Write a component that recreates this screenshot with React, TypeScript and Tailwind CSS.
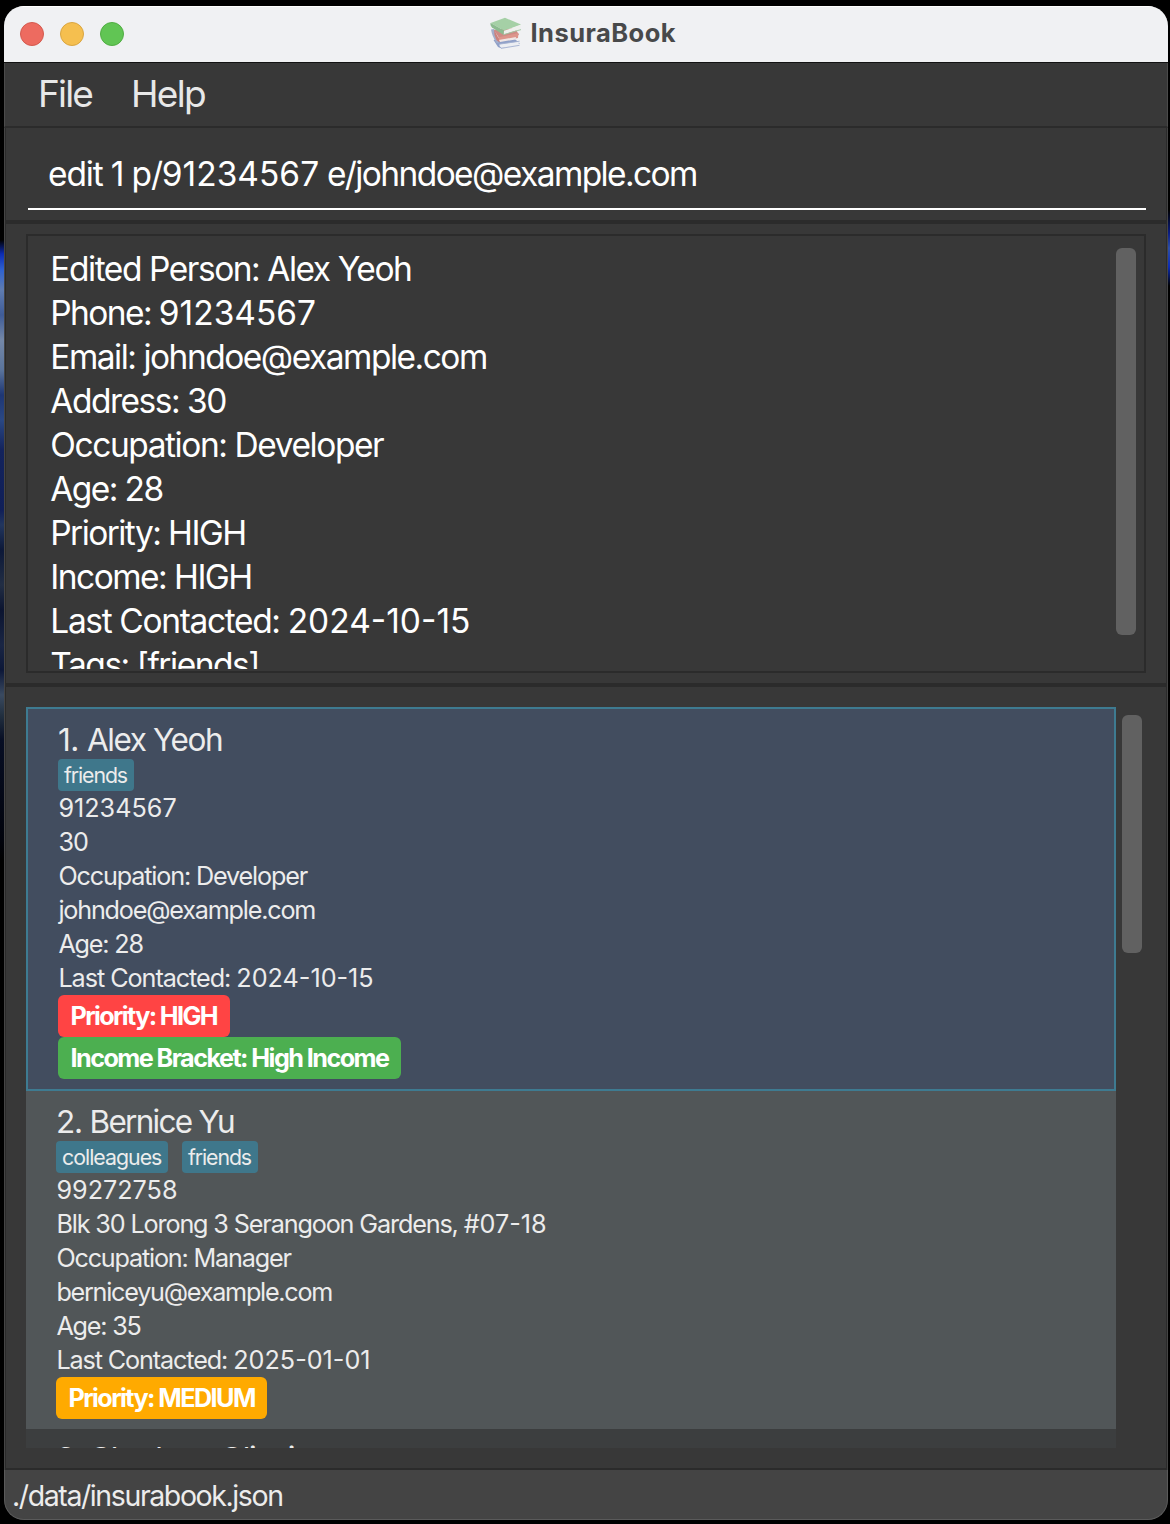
import React from 'react';
import clsx from 'clsx';

type Line = { text: string; digits?: string; tracking: string };

const resultLines: Line[] = [
  { text: 'Edited Person: Alex Yeoh', tracking: 'tracking-[-1.46px]' },
  { text: 'Phone: ', digits: '91234567', tracking: 'tracking-[-1.6px]' },
  { text: 'Email: johndoe@example.com', tracking: 'tracking-[-1.5px]' },
  { text: 'Address: 30', tracking: 'tracking-[-1.5px]' },
  { text: 'Occupation: Developer', tracking: 'tracking-[-1.43px]' },
  { text: 'Age: 28', tracking: 'tracking-[-1.6px]' },
  { text: 'Priority: HIGH', tracking: 'tracking-[-1.57px]' },
  { text: 'Income: HIGH', tracking: 'tracking-[-1.53px]' },
  { text: 'Last Contacted: ', digits: '2024-10-15', tracking: 'tracking-[-1.35px]' },
  { text: 'Tags: [friends]', tracking: 'tracking-[-1.48px]' },
];

type Tag = { label: string; className: string };
type Badge = { label: string; className: string };
type Person = {
  index: string;
  indexTracking: string;
  name: string;
  nameTracking: string;
  tags: Tag[];
  lines: Line[];
  badges: Badge[];
  className: string;
};

const people: Person[] = [
  {
    index: '1. ',
    indexTracking: 'tracking-[-0.6px]',
    name: 'Alex Yeoh',
    nameTracking: 'tracking-[-1.4px]',
    className: 'h-[384px] border-2 border-[#3e7b91] bg-[#424d5f] pt-[10px]',
    tags: [{ label: 'friends', className: 'w-[76px] tracking-[-1.1px]' }],
    lines: [
      { text: '', digits: '91234567', tracking: '' },
      { text: '30', tracking: 'tracking-[-1px]' },
      { text: 'Occupation: Developer', tracking: 'tracking-[-1.15px]' },
      { text: 'johndoe@example.com', tracking: 'tracking-[-1.2px]' },
      { text: 'Age: 28', tracking: 'tracking-[-1.2px]' },
      { text: 'Last Contacted: ', digits: '2024-10-15', tracking: 'tracking-[-1.05px]' },
    ],
    badges: [
      { label: 'Priority: HIGH', className: 'w-[172px] bg-[#ff4444] tracking-[-1.63px]' },
      { label: 'Income Bracket: High Income', className: 'w-[343px] bg-[#4caf50] tracking-[-1.55px]' },
    ],
  },
  {
    index: '2. ',
    indexTracking: 'tracking-[-1.2px]',
    name: 'Bernice Yu',
    nameTracking: 'tracking-[-1.72px]',
    className: 'h-[338px] bg-[#515658] pt-[10px]',
    tags: [
      { label: 'colleagues', className: 'w-[112px] tracking-[-0.98px]' },
      { label: 'friends', className: 'w-[76px] tracking-[-1.1px]' },
    ],
    lines: [
      { text: '', digits: '99272758', tracking: '' },
      { text: 'Blk 30 Lorong 3 Serangoon Gardens, ', digits: '#07-18', tracking: 'tracking-[-1.14px]' },
      { text: 'Occupation: Manager', tracking: 'tracking-[-1.19px]' },
      { text: 'berniceyu@example.com', tracking: 'tracking-[-1.25px]' },
      { text: 'Age: 35', tracking: 'tracking-[-1.2px]' },
      { text: 'Last Contacted: ', digits: '2025-01-01', tracking: 'tracking-[-1.12px]' },
    ],
    badges: [{ label: 'Priority: MEDIUM', className: 'w-[211px] bg-[#ffaa00] tracking-[-1.58px]' }],
  },
  {
    index: '3. ',
    indexTracking: 'tracking-[-1.2px]',
    name: 'Charlotte Oliveiro',
    nameTracking: 'tracking-[-1.4px]',
    className: 'h-[338px] bg-[#3c3e3f] pt-[9px]',
    tags: [],
    lines: [],
    badges: [],
  },
];

function TextLine({ line, className }: { line: Line; className: string }) {
  return (
    <div className={clsx('whitespace-pre', className)}>
      <span className={line.tracking}>{line.text}</span>
      {line.digits && <span>{line.digits}</span>}
    </div>
  );
}

function BooksIcon() {
  return (
    <svg viewBox="0 0 32 32" className="h-8 w-8" aria-hidden="true">
      <path d="M3.5 23 L23 20.5 L30 26.5 L11 31.3 L8 30 Z" fill="#8fa0c8" />
      <path d="M9.5 27.2 L29 24.6 L28.6 28 L11.5 31 Q8.8 29.5 9.5 27.2Z" fill="#eceef2" />
      <path d="M9 27.2 L29.6 24.2 M11 31.4 L29.5 28.3" stroke="#a3b0cf" strokeWidth="0.9" fill="none" />
      <path d="M1 12.5 L4 12 L9 26.5 L6.5 26 Q2 19 1 12.5Z" fill="#a3aecb" />
      <path d="M4 13 L25 11 L29 18 L9 21 Z" fill="#cf8a84" />
      <path d="M5.5 17 L8 20.5 L28.5 16 L28 21 L9.5 24.5 Q5 21.5 5.5 17Z" fill="#dd958b" />
      <path d="M8.8 23 L26 20 L25.6 22.4 L10 25Z" fill="#f0e6e4" />
      <path d="M4 12 L8.6 21.5 L9.8 25.4 L6.6 23.2 Q3.6 17.5 4 12Z" fill="#cb827d" />
      <path d="M0.6 6 L15 0.8 L31 7.6 L14 13.6 Z" fill="#a5d0a6" />
      <path d="M0.6 6 L14 13.6 L13.6 18 L2 10.6 Q-0.2 8 0.6 6Z" fill="#8cbb90" />
      <path d="M14 13.8 L31 8 L30.4 12.2 L13.8 17.4Z" fill="#eef0ed" />
      <path d="M13.4 17.7 L31 12.6" stroke="#9dc5a0" strokeWidth="0.9" />
    </svg>
  );
}

function PersonCard({ person }: { person: Person }) {
  return (
    <div className={clsx('flex shrink-0 flex-col items-start pl-[30px] text-[#ececec]', person.className)}>
      <div className="h-10 shrink-0 text-[31.5px] leading-[41px] whitespace-pre">
        <span className={person.indexTracking}>{person.index}</span>
        <span className={person.nameTracking}>{person.name}</span>
      </div>
      {person.tags.length > 0 && (
        <div className="flex h-8 shrink-0 gap-[14px]">
          {person.tags.map((t) => (
            <span
              key={t.label}
              className={clsx('rounded-[4px] bg-[#3f778b] pl-[6px] text-[21.3px] leading-8 whitespace-nowrap', t.className)}
            >
              {t.label}
            </span>
          ))}
        </div>
      )}
      {person.lines.map((l, i) => (
        <TextLine key={i} line={l} className="h-[34px] pl-[0.4px] text-[25.2px] leading-[34px]" />
      ))}
      {person.badges.map((b) => (
        <span
          key={b.label}
          className={clsx(
            'h-[42px] rounded-[6px] pl-[12.5px] text-[25.2px] leading-[42px] font-bold whitespace-nowrap text-white',
            b.className,
          )}
        >
          {b.label}
        </span>
      ))}
    </div>
  );
}

export default function App() {
  return (
    <div className="flex h-[1524px] w-[1170px] bg-black pt-[6px] pb-1 font-['Inter',sans-serif]">
      <div className="mt-[234px] h-[620px] w-1 shrink-0 bg-[linear-gradient(to_bottom,#000_0,#0c2cb4_14px,#2f62d0_30px,#5f7cb0_50px,#3f5c98_75px,#7488a8_100px,#5a749c_130px,#1e3674_155px,#2a4884_180px,#13235c_210px,#101f58_270px,#22365e_285px,#0c1838_310px,#222e44_345px,#0b1430_370px,#1a2644_405px,#0c1738_430px,#3a4a60_455px,#223040_475px,#070e24_500px,#01030c_600px,#000_620px)]" />

      <div className="flex w-[1164px] flex-col overflow-hidden rounded-[20px] bg-[#383838]">
        <header className="flex h-[57px] shrink-0 items-center border-t border-b border-t-white border-b-[#121212] bg-[#f0f1f3] pl-4">
          <div className="flex gap-4 pb-px">
            <span className="h-6 w-6 rounded-full border border-[#d35a4e] bg-[#ed6b60]" />
            <span className="h-6 w-6 rounded-full border border-[#d9a540] bg-[#f5bf4f]" />
            <span className="h-6 w-6 rounded-full border border-[#51ad43] bg-[#61c554]" />
          </div>
          <div className="ml-[366px] flex items-center pb-1">
            <BooksIcon />
            <h1 className="ml-[8.5px] pt-px text-[25.5px] leading-8 font-bold tracking-[0.45px] text-[#48494a]">InsuraBook</h1>
          </div>
        </header>

        <nav className="flex h-[65px] shrink-0 border-x border-b-2 border-x-[#4b4b4b] border-b-[#2b2b2b] pl-[33px] text-[37px] leading-[61px] text-[#e8e8e8]">
          <span className="w-[93px] tracking-[-1.8px]">File</span>
          <span className="tracking-[-1.7px]">Help</span>
        </nav>

        <main className="flex min-h-0 flex-1 flex-col border-x border-x-[#454545]">
          <section className="h-24 shrink-0 border-x border-b-4 border-[#2b2b2b] px-[22px] pt-[10px]">
            <div className="h-[72px] w-[1118px] border-b-2 border-white pl-5 text-[33.5px] leading-[72px] whitespace-pre text-white">
              <span className="tracking-[-1.15px]">edit 1 p/</span>
              <span>91234567</span>
              <span className="tracking-[-1.6px]"> e/johndoe@example.com</span>
            </div>
          </section>

          <section className="h-[463px] shrink-0 border-x border-b-4 border-[#2b2b2b] pt-[10px] pl-5">
            <div className="flex h-[439px] w-[1120px] justify-between border-2 border-[#2b2b2b] pr-2 pl-[22.3px]">
              <div className="h-[433px] overflow-hidden pt-[11px] text-[33.5px] leading-[44px] text-white">
                {resultLines.map((l) => (
                  <TextLine key={l.text} line={l} className="h-[44px]" />
                ))}
              </div>
              <div className="mt-3 h-[387px] w-5 rounded-[6px] bg-[#616161]" />
            </div>
          </section>

          <section className="flex min-h-0 flex-1 items-start border-x border-b-2 border-[#2b2b2b] pt-5 pl-5">
            <div className="flex h-[741px] w-[1090px] flex-col overflow-hidden">
              {people.map((p) => (
                <PersonCard key={p.name} person={p} />
              ))}
            </div>
            <div className="mt-2 ml-[6px] h-[238px] w-5 rounded-[6px] bg-[#616161]" />
          </section>
        </main>

        <footer className="h-[50px] shrink-0 rounded-b-[20px] border-x border-b border-[#5a5a5a] bg-[#444444] pl-[7px] text-[28.5px] leading-[51px] tracking-[-1.4px] text-[#ececec]">
          ./data/insurabook.json
        </footer>
      </div>

      <div className="mt-[204px] h-[76px] w-[2px] shrink-0 bg-[linear-gradient(to_bottom,#000,#0a1c80_30%,#2d4ea8_50%,#0c2cb4_75%,#000)]" />
    </div>
  );
}
